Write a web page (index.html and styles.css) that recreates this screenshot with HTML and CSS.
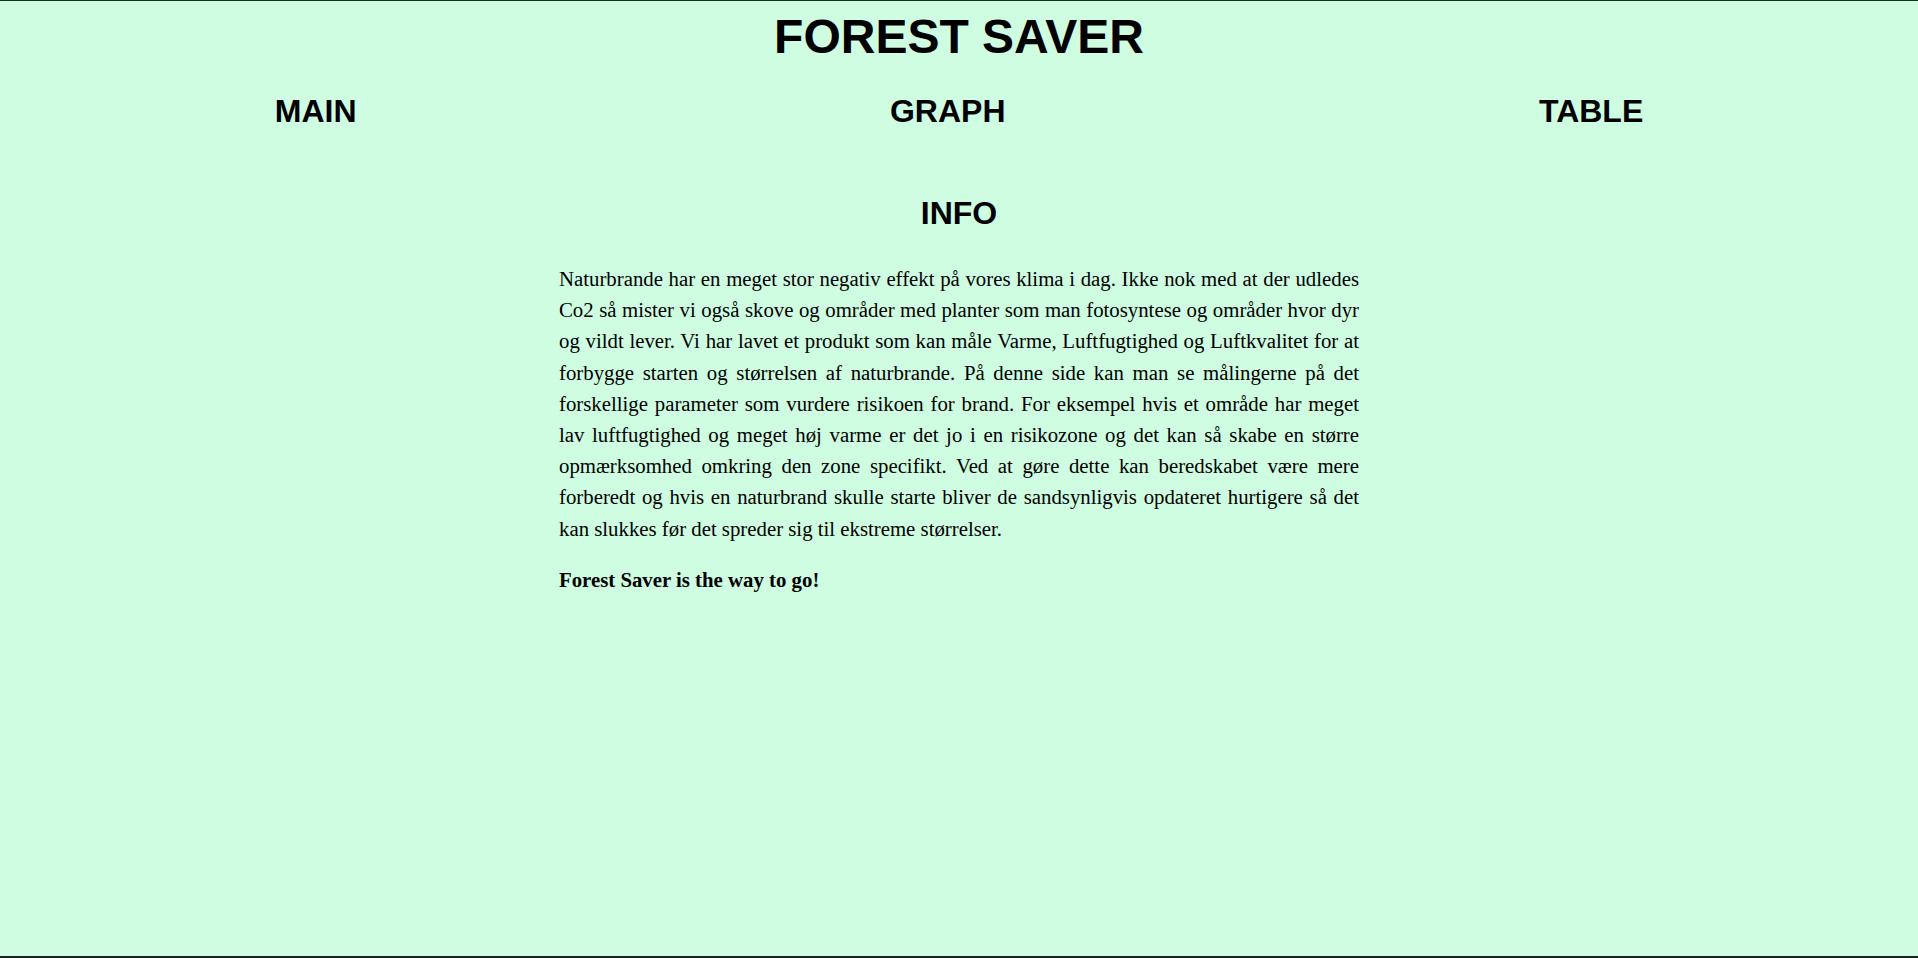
FILE: index.html
```html
<!DOCTYPE html>
<html lang="da">
<head>
<meta charset="utf-8">
<title>Forest Saver</title>
<link rel="stylesheet" href="styles.css">
</head>
<body>
<header class="masthead">
  <h1 class="site-title">FOREST SAVER</h1>
  <nav class="main-nav">
    <a class="nav-link" href="#">MAIN</a>
    <a class="nav-link" href="#">GRAPH</a>
    <a class="nav-link" href="#">TABLE</a>
  </nav>
</header>
<main class="content">
  <h2 class="section-title">INFO</h2>
  <p class="lead">Naturbrande har en meget stor negativ effekt på vores klima i dag. Ikke nok med at der udledes Co2 så mister vi også skove og områder med planter som man fotosyntese og områder hvor dyr og vildt lever. Vi har lavet et produkt som kan måle Varme, Luftfugtighed og Luftkvalitet for at forbygge starten og størrelsen af naturbrande. På denne side kan man se målingerne på det forskellige parameter som vurdere risikoen for brand. For eksempel hvis et område har meget lav luftfugtighed og meget høj varme er det jo i en risikozone og det kan så skabe en større opmærksomhed omkring den zone specifikt. Ved at gøre dette kan beredskabet være mere forberedt og hvis en naturbrand skulle starte bliver de sandsynligvis opdateret hurtigere så det kan slukkes før det spreder sig til ekstreme størrelser.</p>
  <p class="tagline"><strong>Forest Saver is the way to go!</strong></p>
</main>
</body>
</html>
```

FILE: styles.css
```css
html {
  min-height: 100vh;
  box-sizing: border-box;
  background: #cffde1;
  border-top: 1px solid #14301f;
  border-bottom: 2px solid #1d231f;
}

body {
  margin: 8px;
  color: #000;
  font-family: "Liberation Serif", "Times New Roman", serif;
}

.masthead {
  display: flex;
  flex-direction: column;
}

.site-title {
  margin: 0;
  text-align: center;
  font-family: "Liberation Sans", Arial, sans-serif;
  font-weight: bold;
  font-size: 48px;
  line-height: 56px;
}

.main-nav {
  display: flex;
  justify-content: space-around;
  margin-top: 28px;
}

.nav-link {
  color: #000;
  text-decoration: none;
  font-family: "Liberation Sans", Arial, sans-serif;
  font-weight: bold;
  font-size: 32px;
  line-height: 36px;
}

.content {
  width: 800px;
  margin: 66px auto 0;
}

.section-title {
  margin: 0 0 32px;
  text-align: center;
  font-family: "Liberation Sans", Arial, sans-serif;
  font-weight: bold;
  font-size: 32px;
  line-height: 36px;
}

.lead,
.tagline {
  font-size: 20.8px;
  line-height: 1.5;
  text-align: justify;
}

.lead {
  margin: 0;
}

.tagline {
  margin: 20.8px 0 0;
}
```
